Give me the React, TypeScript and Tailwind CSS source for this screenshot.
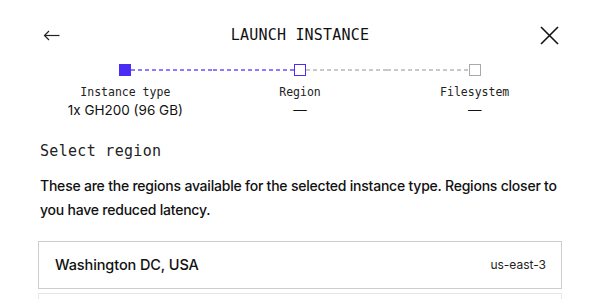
import { ReactNode } from 'react'

const mono = { fontFamily: '"DejaVu Sans Mono", "Liberation Mono", monospace' }

const steps = [
    { label: 'Instance type', value: '1x GH200 (96 GB)', state: 'done' },
    { label: 'Region', value: '—', state: 'active' },
    { label: 'Filesystem', value: '—', state: 'todo' },
]

const purpleDots = 'bg-[repeating-linear-gradient(90deg,#8b7bff_0_4px,transparent_4px_7px)]'
const grayDots = 'bg-[repeating-linear-gradient(90deg,#c9c9c9_0_4px,transparent_4px_7px)]'

function Connector({ className }: { className: string }) {
    return <div className={`flex-1 h-[2px] ${className}`} />
}

function Square({ state }: { state: string }) {
    if (state === 'done') return <div className="w-3 h-3 shrink-0 bg-[#4a2cf5]" />
    if (state === 'active') return <div className="w-3 h-3 shrink-0 border border-[#4a2cf5] bg-white" />
    return <div className="w-3 h-3 shrink-0 border border-[#a9a9a9] bg-white" />
}

function IconButton({ children }: { children: ReactNode }) {
    return <button className="w-[22px] h-[22px] flex items-center justify-center text-[#222]">{children}</button>
}

export default function App() {
    return (
        <div className="w-full h-[299px] overflow-hidden bg-white px-[38px] text-[#111]" style={{ fontFamily: 'Inter, "Liberation Sans", sans-serif' }}>
            {/* Header */}
            <div className="flex items-center justify-between h-[22px] mt-[24px] px-[2px]">
                <IconButton>
                    <svg width="17" height="11" viewBox="0 0 17 11" fill="none" stroke="currentColor" strokeWidth="1.2">
                        <path d="M1.5 5.5H16.5" />
                        <path d="M6 1L1.5 5.5L6 10" />
                    </svg>
                </IconButton>
                <h1 className="text-[15px] leading-[22px] tracking-[0.2px] text-[#111]" style={mono}>LAUNCH INSTANCE</h1>
                <IconButton>
                    <svg width="19" height="19" viewBox="0 0 19 19" fill="none" stroke="#111" strokeWidth="1.6">
                        <path d="M1 1L18 18M18 1L1 18" />
                    </svg>
                </IconButton>
            </div>

            {/* Stepper */}
            <div className="grid grid-cols-3 mt-[18px]">
                {steps.map((step, i) => (
                    <div key={step.label} className="flex flex-col items-center">
                        <div className="flex items-center w-full h-3">
                            <Connector className={i === 0 ? '' : i === 1 ? purpleDots : grayDots} />
                            <Square state={step.state} />
                            <Connector className={i === 0 ? purpleDots : i === 1 ? grayDots : ''} />
                        </div>
                        <div className="mt-2 text-[11.5px] leading-4 text-[#222]" style={mono}>{step.label}</div>
                        <div className="text-[13.5px] leading-5 text-[#111]">{step.value}</div>
                    </div>
                ))}
            </div>

            {/* Region select */}
            <h2 className="mt-[21px] pl-[2px] text-[15px] leading-5 tracking-[0.3px] text-[#222]" style={mono}>Select region</h2>
            <p className="mt-[13px] pl-[2px] text-[14px] leading-6 tracking-[-0.22px] font-medium text-[#111]">
                These are the regions available for the selected instance type. Regions closer to you have reduced latency.
            </p>

            <div className="mt-[19px] flex flex-col gap-1">
                <div className="h-12 flex items-center justify-between pl-[16px] pr-[15px] border border-[#cdcdcd]">
                    <span className="text-[14.5px] font-medium tracking-[-0.1px]">Washington DC, USA</span>
                    <span className="text-[12px] text-[#222]">us-east-3</span>
                </div>
                <div className="h-12 border border-[#e6e6e6]" />
            </div>
        </div>
    )
}
